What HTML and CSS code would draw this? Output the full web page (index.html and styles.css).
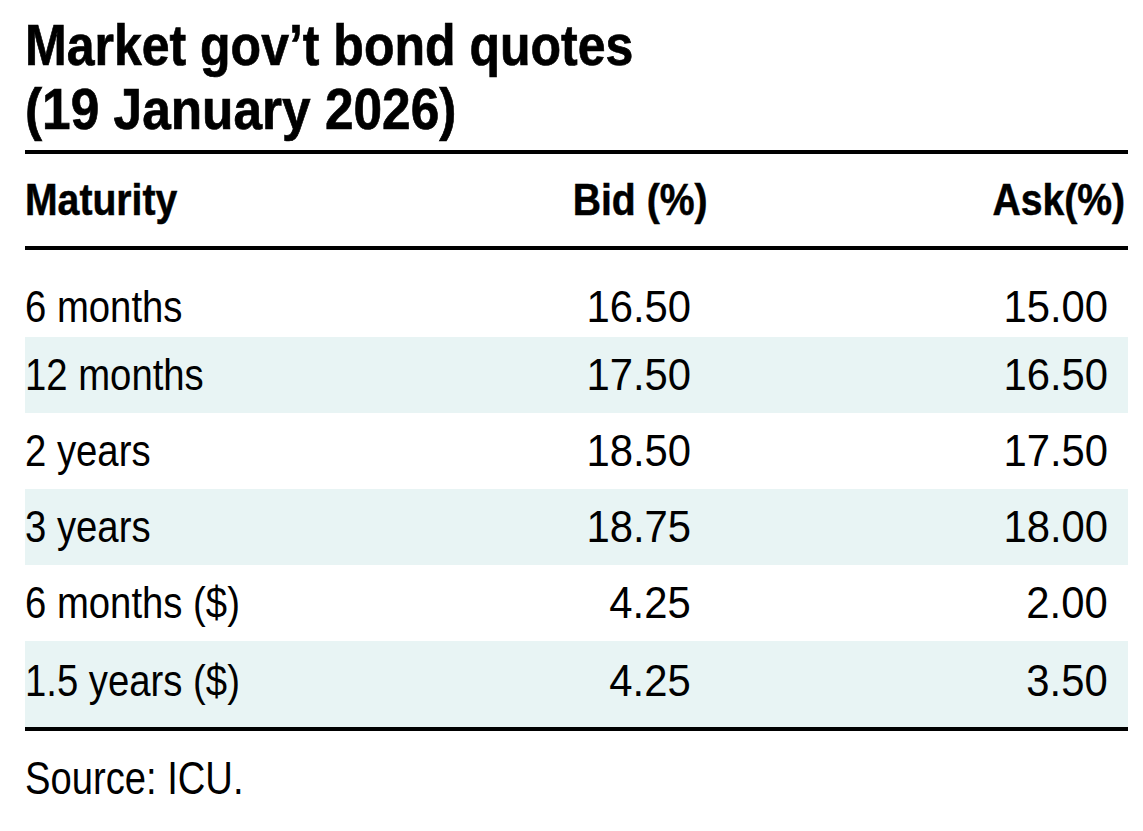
FILE: index.html
```html
<!DOCTYPE html>
<html lang="en">
<head>
<meta charset="utf-8">
<title>Market gov't bond quotes</title>
<link rel="stylesheet" href="styles.css">
</head>
<body>
<main class="panel">
  <h1 class="title"><span class="cond line-one">Market gov’t bond quotes</span><br><span class="cond line-two">(19 January 2026)</span></h1>
  <div class="table">
    <div class="row head">
      <div class="cell"><span class="cond">Maturity</span></div>
      <div class="cell num"><span class="cond">Bid (%)</span></div>
      <div class="cell num"><span class="cond">Ask(%)</span></div>
    </div>
    <div class="row first">
      <div class="cell"><span class="cond">6 months</span></div>
      <div class="cell num"><span class="cond">16.50</span></div>
      <div class="cell num"><span class="cond">15.00</span></div>
    </div>
    <div class="row alt">
      <div class="cell"><span class="cond">12 months</span></div>
      <div class="cell num"><span class="cond">17.50</span></div>
      <div class="cell num"><span class="cond">16.50</span></div>
    </div>
    <div class="row">
      <div class="cell"><span class="cond">2 years</span></div>
      <div class="cell num"><span class="cond">18.50</span></div>
      <div class="cell num"><span class="cond">17.50</span></div>
    </div>
    <div class="row alt">
      <div class="cell"><span class="cond">3 years</span></div>
      <div class="cell num"><span class="cond">18.75</span></div>
      <div class="cell num"><span class="cond">18.00</span></div>
    </div>
    <div class="row">
      <div class="cell"><span class="cond">6 months ($)</span></div>
      <div class="cell num"><span class="cond">4.25</span></div>
      <div class="cell num"><span class="cond">2.00</span></div>
    </div>
    <div class="row alt last">
      <div class="cell"><span class="cond">1.5 years ($)</span></div>
      <div class="cell num"><span class="cond">4.25</span></div>
      <div class="cell num"><span class="cond">3.50</span></div>
    </div>
  </div>
  <p class="source"><span class="cond">Source: ICU.</span></p>
</main>
</body>
</html>
```

FILE: styles.css
```css
html, body {
  margin: 0;
  padding: 0;
  background: #ffffff;
}

body {
  font-family: "Liberation Sans", Arial, sans-serif;
  color: #000000;
}

.panel {
  width: 1103px;
  margin: 0 15px 0 25px;
}

/* condensed look: the text is squeezed horizontally */
.cond {
  display: inline-block;
  transform-origin: left center;
  transform: scaleX(0.87);
  white-space: nowrap;
}

.title {
  margin: 13px 0 0;
  padding-bottom: 9px;
  font-size: 58px;
  line-height: 64px;
  font-weight: 700;
  border-bottom: 4px solid #000;
  -webkit-text-stroke: 0.7px #000;
}

.title .line-one {
  transform: scaleX(0.862);
}

.title .line-two {
  transform: scaleX(0.886);
}

.table {
  border-bottom: 4px solid #000;
}

.row {
  display: grid;
  grid-template-columns: 270px 416px 417px;
  font-size: 44px;
  line-height: 76px;
}

.row.head {
  line-height: 92px;
  font-weight: 700;
  border-bottom: 4px solid #000;
  -webkit-text-stroke: 0.5px #000;
}

.row.head .cond {
  transform: scaleX(0.89);
}

.row.first {
  padding-top: 26px;
  line-height: 61px;
}

.row.last {
  padding-top: 2px;
  padding-bottom: 8px;
}

.row.alt {
  background: #e8f4f4;
}

.cell.num {
  text-align: right;
  padding-right: 20px;
}

.cell.num .cond {
  transform-origin: right center;
  transform: scaleX(0.95);
}

.head .cell.num {
  padding-right: 3px;
}

.head .cell.num .cond {
  transform: scaleX(0.89);
}

.source {
  margin: 19px 0 0;
  font-size: 46px;
  line-height: 56px;
}

.source .cond {
  transform: scaleX(0.83);
}
```
